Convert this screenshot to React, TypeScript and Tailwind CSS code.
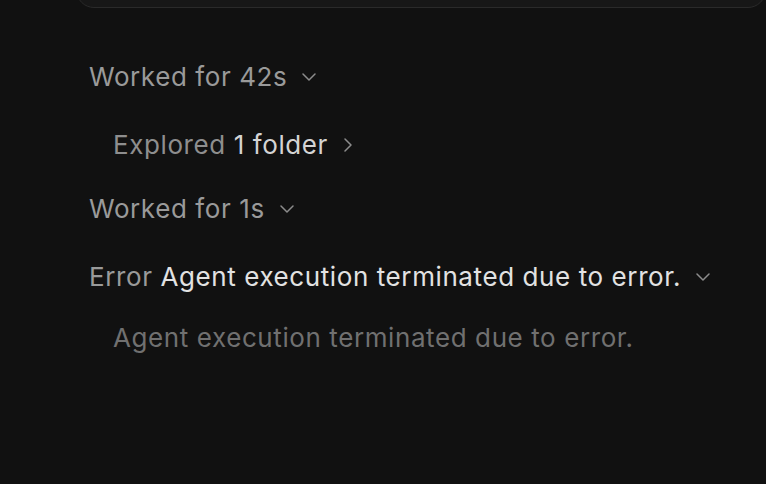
function ChevronDown() {
  return (
    <svg className="w-[14px] h-[14px] text-[#8c8c8c]" viewBox="0 0 14 14" fill="none" stroke="currentColor" strokeWidth="1.5" strokeLinecap="round" strokeLinejoin="round">
      <path d="M1 4l6 6 6-6" />
    </svg>
  );
}

function ChevronRight() {
  return (
    <svg className="w-[14px] h-[14px] text-[#8c8c8c]" viewBox="0 0 14 14" fill="none" stroke="currentColor" strokeWidth="1.5" strokeLinecap="round" strokeLinejoin="round">
      <path d="M4 1l6 6-6 6" />
    </svg>
  );
}

export default function App() {
  return (
    <div className="w-[766px] h-[484px] bg-[#111111] overflow-hidden font-['Inter',sans-serif] tracking-[0.037em]">
      {/* input box edge from above */}
      <div className="ml-[76px] -mt-[40px] h-[48px] rounded-[18px] border border-[#2a2a2a] bg-[#171717]" />

      <div className="pl-[89px] pt-[52px] flex flex-col text-[26px] leading-[34px]">
        <div className="flex items-center gap-[15px] text-[#9a9a9a]">
          <span>Worked for 42s</span>
          <ChevronDown />
        </div>

        <div className="flex items-center gap-[13px] pl-[24px] mt-[34px]">
          <span>
            <span className="text-[#8e8e8e]">Explored</span>{" "}
            <span className="text-[#d4d4d4]">1 folder</span>
          </span>
          <ChevronRight />
        </div>

        <div className="flex items-center gap-[15px] text-[#9a9a9a] mt-[30px]">
          <span>Worked for 1s</span>
          <ChevronDown />
        </div>

        <div className="flex items-center gap-[15px] mt-[34px]">
          <span>
            <span className="text-[#9a9a9a]">Error</span>{" "}
            <span className="text-[#e2e2e2]">Agent execution terminated due to error.</span>
          </span>
          <ChevronDown />
        </div>

        <div className="pl-[24px] mt-[27px] text-[#707070]">
          Agent execution terminated due to error.
        </div>
      </div>
    </div>
  );
}
